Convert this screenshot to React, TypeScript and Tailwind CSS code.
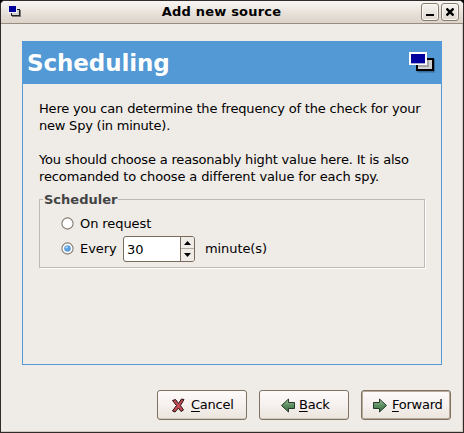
import React from "react";

function WindowsIcon({ size }: { size: "small" | "large" }) {
  if (size === "small") {
    return (
      <svg width="14" height="12" viewBox="0 0 14 12" shapeRendering="crispEdges">
        <rect x="4" y="4" width="9" height="7" fill="#777" />
        <rect x="3" y="3" width="9" height="7" fill="#222" />
        <rect x="4" y="4" width="7" height="5" fill="#d0d0d0" />
        <rect x="0" y="0" width="9" height="7" fill="#f0f0fa" />
        <rect x="1" y="0" width="7" height="6" fill="#00009c" />
      </svg>
    );
  }
  return (
    <svg width="27" height="22" viewBox="0 0 27 22">
      <rect x="8" y="7" width="18" height="13.500" fill="#1f3f60" opacity=".5" />
      <rect x="7" y="6" width="18" height="13" fill="#000" />
      <rect x="9" y="8" width="14" height="9" fill="#d2d2d2" />
      <path d="M9 14h10V8" fill="none" stroke="#a4a4a4" strokeWidth="2" />
      <rect x="0" y="0" width="18" height="13" fill="#fff" />
      <rect x="2" y="2" width="14" height="10" fill="#00009c" />
      <rect x="2" y="11" width="14" height="1" fill="#aaaad8" />
    </svg>
  );
}

function WinButton({ children }: { children: React.ReactNode }) {
  return (
    <div className="flex h-[18px] w-[18px] items-center justify-center rounded-[3px] border border-[#877b6e] bg-gradient-to-b from-[#f6f3f0] to-[#dfd8cf] shadow-[inset_0_0_0_1px_#faf8f5]">
      {children}
    </div>
  );
}

function Arrow({ flip = false }: { flip?: boolean }) {
  return (
    <svg width="15" height="15" viewBox="0 0 15 15" className={flip ? "-scale-x-100" : ""}>
      <defs>
        <linearGradient id="arrowFill" x1="0" y1="0" x2="0" y2="1">
          <stop offset="0" stopColor="#a3c6a0" />
          <stop offset=".5" stopColor="#5c8d60" />
          <stop offset="1" stopColor="#3b6b43" />
        </linearGradient>
      </defs>
      <path d="M.5 4.500h6v-3.500L13.500 7.500l-7 6.500v-3.500h-6z" fill="url(#arrowFill)" stroke="#26382a" />
    </svg>
  );
}

function Radio({ checked = false }: { checked?: boolean }) {
  return (
    <svg width="13" height="13" viewBox="0 0 13 13" className={checked ? "-mt-[2px]" : ""}>
      <circle cx="6.500" cy="6.500" r="5.600" fill="#fff" stroke="#857a6e" strokeWidth="1.100" />
      {checked && <circle cx="6.500" cy="6.500" r="3.300" fill="#5a9fdc" />}
      {checked && <circle cx="5.600" cy="5.300" r="1.100" fill="#c3e0f8" />}
    </svg>
  );
}

const buttonClass =
  "flex h-[30px] w-[90px] items-center rounded-[3px] border border-[#7e7263] bg-gradient-to-b from-[#fdfbfa] via-[#f6f0ee] to-[#ebe5dd] tracking-[-0.25px]";

export default function App() {
  return (
    <div className="h-[433px] w-[464px] bg-black">
      <div className="flex h-[433px] w-[464px] flex-col overflow-hidden rounded-t-[5px] border border-[#302b29] bg-[#efebe7] font-['DejaVu_Sans',sans-serif] text-[13px] text-black shadow-[inset_-1px_-1px_0_#d0c8be]">
        <header className="flex h-[23px] shrink-0 items-center border-b border-[#9b8c7e] bg-gradient-to-b from-[#f8f6f4] via-[#e9e3dc] to-[#dcd3c9] pr-[4px] pl-[7px]">
          <WindowsIcon size="small" />
          <h1 className="flex-1 text-center text-[13px] leading-[22px] font-bold tracking-[0.2px] whitespace-nowrap">Add new source</h1>
          <div className="flex gap-[2px]">
            <WinButton>
              <svg width="8" height="12" viewBox="0 0 8 12" shapeRendering="crispEdges"><path d="M0 8h8v2H0z" /></svg>
            </WinButton>
            <WinButton>
              <svg width="8" height="8" viewBox="0 0 8 8"><path d="M.5 .5l7 7M7.500 .5l-7 7" stroke="#000" strokeWidth="2.400" /></svg>
            </WinButton>
          </div>
        </header>

        <section className="mx-[21px] mt-[17px] h-[324px] w-[420px] shrink-0 border border-[#5299d5] text-[13px] tracking-[-0.18px]">
          <div className="flex h-[42px] items-center justify-between bg-[#5299d5] pr-[5px] pl-[4px]">
            <h2 className="text-[23px] leading-[40px] font-bold tracking-[-0.1px] text-white">Scheduling</h2>
            <WindowsIcon size="large" />
          </div>
          <div className="pt-[16px] pl-[16px] leading-[17px] whitespace-nowrap">
            <p>Here you can determine the frequency of the check for your</p>
            <p className="tracking-[-0.22px]">new Spy (in minute).</p>
            <p className="mt-[17px]">You should choose a reasonably hight value here. It is also</p>
            <p className="tracking-[-0.13px]">recomanded to choose a different value for each spy.</p>
          </div>
          <fieldset className="mt-[6px] ml-[16px] h-[77px] w-[386px] border border-[#bdb9b7] tracking-[-0.08px] shadow-[1px_1px_0_#fff]">
            <legend className="ml-[3px] px-[1px] text-[13px] leading-[17px] font-bold tracking-normal text-[#444]">Scheduler</legend>
            <div className="mt-[7px] ml-[21px] flex h-[17px] items-center gap-[6px]">
              <Radio />
              <span>On request</span>
            </div>
            <div className="mt-[4px] ml-[21px] flex h-[26px] items-center">
              <Radio checked />
              <span className="-mt-px ml-[6px] w-[43px]">Every</span>
              <div className="flex h-[26px] w-[72px] overflow-hidden rounded-[3px] border border-[#786b5c] bg-white">
                <span className="w-[56px] pl-[3px] leading-[25px]">30</span>
                <div className="flex flex-1 flex-col border-l border-[#786b5c] bg-[#efebe7]">
                  <div className="flex h-[12px] items-center justify-center border-b border-[#b5aaa0]">
                    <svg width="7" height="4" viewBox="0 0 7 4"><path d="M3.500 0L7 4H0z" /></svg>
                  </div>
                  <div className="flex h-[12px] items-center justify-center">
                    <svg width="7" height="4" viewBox="0 0 7 4"><path d="M0 0h7L3.500 4z" /></svg>
                  </div>
                </div>
              </div>
              <span className="ml-[10px]">minute(s)</span>
            </div>
          </fieldset>
        </section>

        <footer className="mt-[25px] mr-[12px] flex justify-end gap-[12px]">
          <button className={`${buttonClass} pl-[13px] shadow-[inset_0_-1px_0_#d4cbbf]`}>
            <svg width="15" height="15" viewBox="0 0 15 15">
              <path d="M1.500 2.500l3-1 3 4 3-4.500 2.500 .5L9.500 7.500l3 4.500-2.500 1.500L7.500 10l-3.500 4-2.500-1L5.500 7.500z" fill="#c34b55" stroke="#2b1012" />
            </svg>
            <span className="ml-[5px]"><u className="underline underline-offset-2">C</u>ancel</span>
          </button>
          <button className={`${buttonClass} pl-[20px] shadow-[inset_0_-1px_0_#d4cbbf]`}>
            <Arrow flip />
            <span className="ml-[4px]"><u className="underline underline-offset-2">B</u>ack</span>
          </button>
          <button className={`${buttonClass} pl-[11px] shadow-[inset_0_0_0_1px_#b8a999]`}>
            <Arrow />
            <span className="ml-[4px]"><u className="underline underline-offset-2">F</u>orward</span>
          </button>
        </footer>
      </div>
    </div>
  );
}
